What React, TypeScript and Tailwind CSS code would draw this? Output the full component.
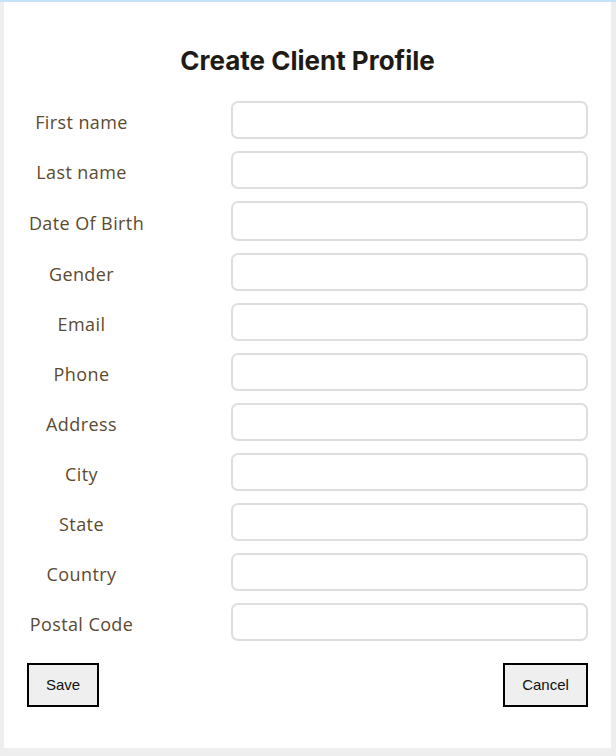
import React from "react";

const fields = [
  "First name",
  "Last name",
  "Date Of Birth",
  "Gender",
  "Email",
  "Phone",
  "Address",
  "City",
  "State",
  "Country",
  "Postal Code",
];

export default function App() {
  return (
    <div className="min-h-[756px] w-[616px] bg-[#eeeeee] border-t-2 border-[#c4e3f6]">
      <div className="ml-[4px] w-[607px] h-[746px] bg-white flex flex-col">
        <h1
          className="mt-[43px] text-center text-[26px] leading-[32px] font-bold text-[#1e1a14]"
          style={{ fontFamily: "Inter, 'Liberation Sans', sans-serif" }}
        >
          Create Client Profile
        </h1>
        <div className="mt-[24px] flex flex-col gap-[12px]">
          {fields.map((f, i) => (
            <div key={f} className="flex items-center">
              <label
                className={
                  i === 2
                    ? "w-[155px] pt-[4px] pl-[10px] text-center text-[18px] tracking-[0.4px] text-[#5b4a31]"
                    : "w-[155px] pt-[4px] text-center text-[18px] tracking-[0.4px] text-[#5b4a31]"
                }
                style={{ fontFamily: "'Open Sans', sans-serif" }}
              >
                {f}
              </label>
              <input
                type="text"
                className={
                  i === 2
                    ? "ml-[72px] w-[357px] h-[40px] rounded-[7px] border-2 border-[#dedede] bg-white outline-none"
                    : "ml-[72px] w-[357px] h-[38px] rounded-[7px] border-2 border-[#dedede] bg-white outline-none"
                }
              />
            </div>
          ))}
        </div>
        <div
          className="mt-[22px] flex justify-between pl-[23px] pr-[23px]"
          style={{ fontFamily: "'Liberation Sans', Arial, sans-serif" }}
        >
          <button className="w-[72px] h-[44px] border-2 border-black bg-[#efefef] text-[15px] text-[#111]">
            Save
          </button>
          <button className="w-[85px] h-[44px] border-2 border-black bg-[#efefef] text-[15px] text-[#111]">
            Cancel
          </button>
        </div>
      </div>
    </div>
  );
}
